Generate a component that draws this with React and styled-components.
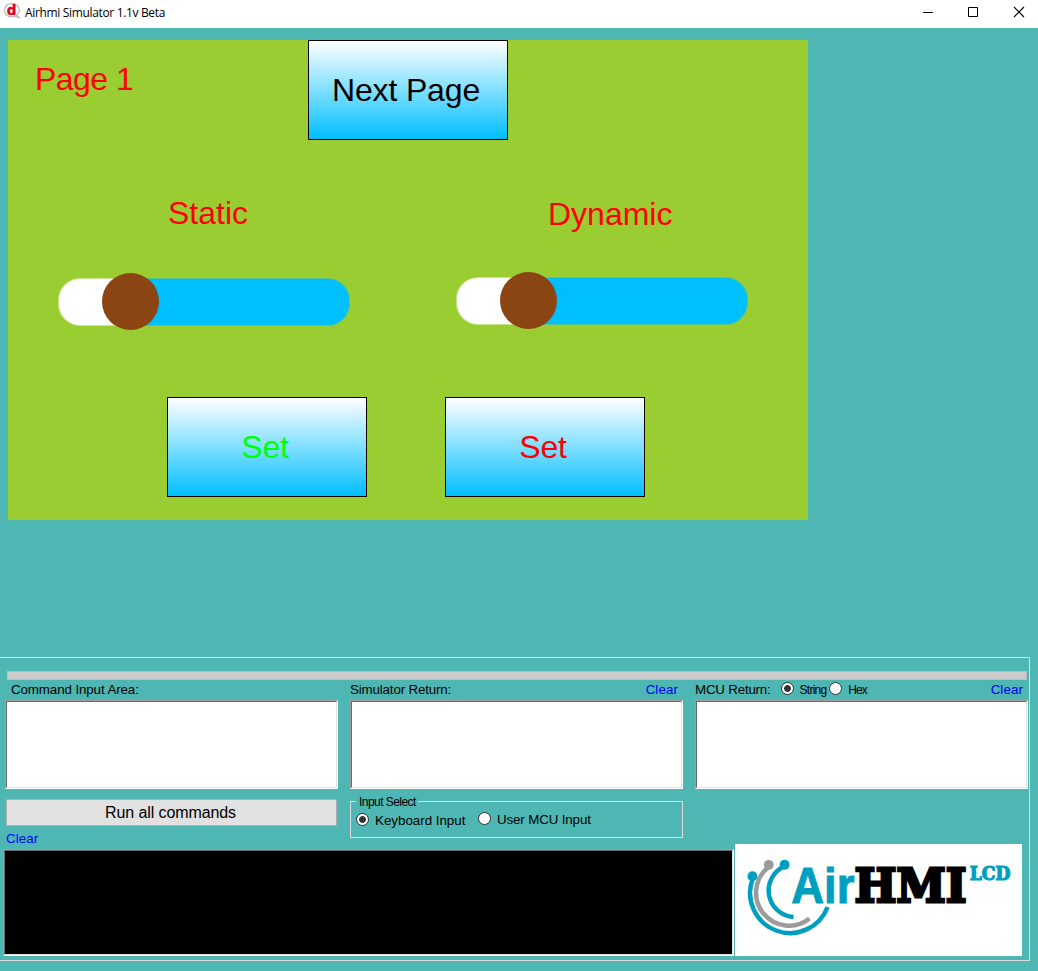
import React from 'react';
import styled, { createGlobalStyle } from 'styled-components';

const GlobalStyle = createGlobalStyle`
  *, *::before { box-sizing: border-box; }
  body {
    margin: 0;
    overflow: hidden;
    background: #4eb6b3;
    font-family: 'Liberation Sans', Arial, sans-serif;
  }
`;

const Window = styled.div`
  width: 1038px;
  height: 971px;
  display: flex;
  flex-direction: column;
  background: #4eb6b3;
`;

const TitleBar = styled.header`
  height: 28px;
  flex: none;
  display: flex;
  align-items: flex-start;
  background: #fff;
`;

const AppIcon = styled.svg`
  width: 18px;
  height: 18px;
  margin: 2px 0 0 3px;
`;

const Title = styled.span`
  flex: 1;
  margin: 4px 0 0 4px;
  font: 12px/18px 'Open Sans', 'Noto Sans', sans-serif;
  letter-spacing: -0.34px;
  color: #000;
`;

const WindowControls = styled.div`
  display: flex;
  height: 24px;
  padding-right: 13px;
  gap: 34px;
  align-items: center;
  svg { width: 12px; height: 12px; display: block; }
`;

const Screen = styled.main`
  width: 800px;
  height: 480px;
  flex: none;
  margin: 12px 0 0 8px;
  background: #9acd32;
  display: flex;
  flex-direction: column;
`;

const ScreenRow = styled.div`
  display: flex;
  align-items: flex-start;
  height: ${(p) => p.$height}px;
  padding-left: ${(p) => p.$indent}px;
`;

const ScreenText = styled.div`
  width: ${(p) => p.$width}px;
  margin-top: ${(p) => p.$top || 0}px;
  font-size: 32px;
  line-height: 36px;
  letter-spacing: ${(p) => p.$spacing || 0}px;
  white-space: nowrap;
  color: #f00;
`;

const GradientButton = styled.button`
  width: 200px;
  height: 100px;
  padding: 0 4px 0 0;
  border: 1px solid #000;
  background: linear-gradient(#fff, #00bfff);
  font: 32px/36px 'Liberation Sans', Arial, sans-serif;
  letter-spacing: -0.15px;
  color: ${(p) => p.$color || '#000'};
`;

const Track = styled.div`
  width: 292px;
  height: 48px;
  margin-top: ${(p) => p.$top}px;
  border: 1px solid rgba(154, 205, 50, 0.55);
  border-radius: 22px;
  display: flex;
  align-items: center;
  padding-left: 43px;
  background: linear-gradient(90deg, #fff 72px, #00bfff 72px) border-box;
`;

const Thumb = styled.div`
  width: 57px;
  height: 57px;
  margin-bottom: 1px;
  flex: none;
  border-radius: 50%;
  background: #8b4513;
`;

const Panel = styled.section`
  width: 1030px;
  height: 304px;
  margin-top: 137px;
  padding-top: 13px;
  border: solid #dcdcdc;
  border-width: 1px 1px 1px 0;
`;

const Progress = styled.div`
  width: 1020px;
  height: 9px;
  margin-left: 7px;
  border: 1px solid #bcbcbc;
  background: #cbcbcb;
`;

const Columns = styled.div`
  display: flex;
  gap: 12px;
  padding-left: 5px;
`;

const Column = styled.div`
  width: 333px;
`;

const ColumnHead = styled.div`
  height: 20px;
  display: flex;
  padding: 2px 5px 0 ${(p) => p.$indent || 0}px;
`;

const Label = styled.span`
  margin-top: ${(p) => p.$top || 0}px;
  font-size: 13.33px;
  line-height: 16px;
  white-space: nowrap;
  letter-spacing: ${(p) => p.$spacing || 0}px;
  color: #000;
`;

const SmallLabel = styled(Label)`
  font-size: 12px;
`;

const ClearLink = styled.a`
  margin-left: auto;
  font-size: 13.33px;
  line-height: 16px;
  letter-spacing: 0.1px;
  color: #00f;
`;

const Inset = styled.div`
  height: ${(p) => p.$height}px;
  width: ${(p) => p.$width}px;
  border: 1px solid;
  border-color: #a0a0a0 #fff #fff #a0a0a0;
  &::before {
    content: '';
    display: block;
    height: 100%;
    border: 1px solid;
    border-color: #696969 #e3e3e3 #e3e3e3 #696969;
    background: ${(p) => p.$fill || '#fff'};
  }
`;

const RadioRing = styled.span`
  width: 13px;
  height: 13px;
  flex: none;
  margin: ${(p) => p.$margin};
  border: 1px solid #333;
  border-radius: 50%;
  background: ${(p) => (p.$checked ? 'radial-gradient(circle, #333 3px, #fff 3.8px)' : '#fff')};
`;

const ActionRow = styled.div`
  display: flex;
  align-items: flex-start;
  padding: 10px 0 0 6px;
  height: 42px;
`;

const RunButton = styled.button`
  width: 331px;
  height: 27px;
  padding: 0 2px 0 0;
  border: 1px solid #adadad;
  background: #e1e1e1;
  font: 16px/20px 'Liberation Sans', Arial, sans-serif;
  letter-spacing: -0.1px;
  color: #000;
`;

const InputSelect = styled.fieldset`
  width: 333px;
  height: 43px;
  margin: -4px 0 0 13px;
  padding: 0 0 0 5px;
  border: 1px solid #dcdcdc;
  display: flex;
  align-items: flex-start;
  legend {
    height: 13px;
    padding: 1px 2px 0 3px;
    font-size: 12px;
    line-height: 13px;
    letter-spacing: -0.55px;
    white-space: nowrap;
  }
`;

const ConsoleHead = styled.div`
  height: 18px;
  padding-left: 6px;
  display: flex;
  a { margin-left: 0; }
`;

const Footer = styled.div`
  display: flex;
  align-items: flex-end;
  gap: 1px;
  padding-left: 3px;
  margin-top: -5px;
`;

const LogoBox = styled.svg`
  width: 287px;
  height: 112px;
  background: #fff;
`;

function Radio({ checked, margin }) {
  return <RadioRing $checked={checked} $margin={margin} role="radio" aria-checked={!!checked} />;
}

function Logo() {
  return (
    <LogoBox viewBox="735 844 287 112">
      <g fill="none" strokeWidth="4.5">
        <path d="M752.6 879 A39.6 39.6 0 1 0 827.6 907" stroke="#009fc0" />
        <path d="M768.5 867 A32 32 0 1 0 809.5 918.5" stroke="#9b9b9b" />
        <path d="M784 866.5 A26.5 26.5 0 0 0 793.5 917" stroke="#009fc0" />
      </g>
      <circle cx="752.4" cy="876.2" r="4.9" fill="#009fc0" />
      <circle cx="768.8" cy="864.8" r="4.9" fill="#9b9b9b" />
      <circle cx="784.6" cy="864.8" r="5" fill="#009fc0" />
      <text x="791.3" y="903" fontFamily="Liberation Sans" fontWeight="700" fontSize="50.5" fill="#009fc0" stroke="#009fc0" strokeWidth="1" textLength="63" lengthAdjust="spacingAndGlyphs">Air</text>
      <text x="854.6" y="902.4" fontFamily="DejaVu Serif" fontWeight="700" fontSize="47.5" fill="#000" stroke="#000" strokeWidth="3" textLength="112" lengthAdjust="spacingAndGlyphs">HMI</text>
      <text x="969.7" y="880.1" fontFamily="DejaVu Serif" fontWeight="700" fontSize="17.6" fill="#009fc0" stroke="#009fc0" strokeWidth="1.2" textLength="40.6" lengthAdjust="spacingAndGlyphs">LCD</text>
    </LogoBox>
  );
}

export default function App() {
  return (
    <Window>
      <GlobalStyle />
      <TitleBar>
        <AppIcon viewBox="0 0 18 18">
          <path d="M8.5 1.5 C13 1.3 16.3 4.3 16.3 8 C16.3 10.5 15 12.2 13.5 13.3 L16 15.5 L11 14.5 C5 16 1.5 12.5 1.5 8.2 C1.5 4.5 4.5 1.6 8.5 1.5Z" fill="#fff" stroke="#b4b4b4" strokeWidth="1.2" />
          <text x="3.8" y="13" fontFamily="DejaVu Sans" fontWeight="700" fontSize="13.5" fill="#e2001f" stroke="#e2001f" strokeWidth=".4">d</text>
        </AppIcon>
        <Title>Airhmi Simulator 1.1v Beta</Title>
        <WindowControls>
          <svg viewBox="0 0 12 12"><path d="M2 6.5H12" stroke="#000" /></svg>
          <svg viewBox="0 0 12 12"><path d="M1.5 1.5H10.5V10.5H1.5Z" stroke="#000" fill="none" /></svg>
          <svg viewBox="0 0 12 12"><path d="M1 1L11 11M11 1L1 11" stroke="#000" strokeWidth="1.1" /></svg>
        </WindowControls>
      </TitleBar>

      <Screen>
        <ScreenRow $height={155} $indent={27}>
          <ScreenText $width={273} $top={21} $spacing={-0.55}>Page 1</ScreenText>
          <GradientButton>Next Page</GradientButton>
        </ScreenRow>
        <ScreenRow $height={77} $indent={160}>
          <ScreenText $width={380}>Static</ScreenText>
          <ScreenText $top={1}>Dynamic</ScreenText>
        </ScreenRow>
        <ScreenRow $height={125} $indent={50}>
          <Track $top={6}><Thumb /></Track>
          <ScreenRow $height={60} $indent={106}>
            <Track $top={5}><Thumb /></Track>
          </ScreenRow>
        </ScreenRow>
        <ScreenRow $height={100} $indent={159}>
          <GradientButton $color="#0f0">Set</GradientButton>
          <ScreenRow $height={100} $indent={78}>
            <GradientButton $color="#f00">Set</GradientButton>
          </ScreenRow>
        </ScreenRow>
      </Screen>

      <Panel>
        <Progress />
        <Columns>
          <Column>
            <ColumnHead $indent={6}><Label $spacing={-0.1}>Command Input Area:</Label></ColumnHead>
            <Inset $height={89} />
          </Column>
          <Column>
            <ColumnHead><Label $spacing={-0.15}>Simulator Return:</Label><ClearLink>Clear</ClearLink></ColumnHead>
            <Inset $height={89} />
          </Column>
          <Column>
            <ColumnHead>
              <Label $spacing={-0.2}>MCU Return:</Label>
              <Radio checked margin="0 6px 0 10px" />
              <SmallLabel $spacing={-0.75}>String</SmallLabel>
              <Radio margin="0 6px 0 2.8px" />
              <SmallLabel $spacing={-0.9}>Hex</SmallLabel>
              <ClearLink>Clear</ClearLink>
            </ColumnHead>
            <Inset $height={89} />
          </Column>
        </Columns>
        <ActionRow>
          <RunButton>Run all commands</RunButton>
          <InputSelect>
            <legend>Input Select</legend>
            <Radio checked margin="5px 6px 0 0" />
            <Label $top={5}>Keyboard Input</Label>
            <Radio margin="4px 5.5px 0 13px" />
            <Label $top={4} $spacing={-0.12}>User MCU Input</Label>
          </InputSelect>
        </ActionRow>
        <ConsoleHead><ClearLink>Clear</ClearLink></ConsoleHead>
        <Footer>
          <Inset $height={107} $width={731} $fill="#000" />
          <Logo />
        </Footer>
      </Panel>
    </Window>
  );
}
